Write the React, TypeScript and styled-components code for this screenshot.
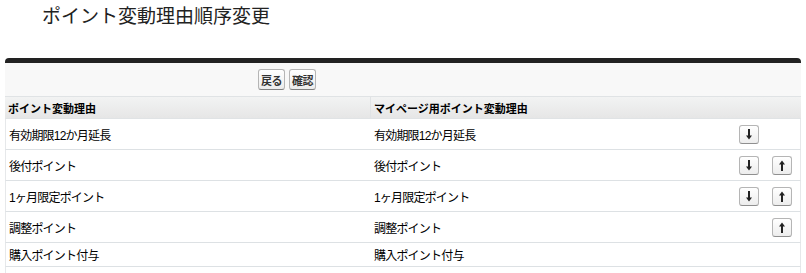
import { createGlobalStyle, styled } from 'styled-components';

const GlobalStyle = createGlobalStyle`
  body {
    margin: 0;
    background: #fff;
    font-family: Arial, 'Liberation Sans', 'Noto Sans CJK JP', sans-serif;
    color: #000;
  }
`;

type Reason = { name: string; myPage: string; down: boolean; up: boolean };

const reasons: Reason[] = [
  { name: '有効期限12か月延長', myPage: '有効期限12か月延長', down: true, up: false },
  { name: '後付ポイント', myPage: '後付ポイント', down: true, up: true },
  { name: '1ヶ月限定ポイント', myPage: '1ヶ月限定ポイント', down: true, up: true },
  { name: '調整ポイント', myPage: '調整ポイント', down: false, up: true },
  { name: '購入ポイント付与', myPage: '購入ポイント付与', down: false, up: false },
  { name: '購入翌サ月特別ポイント付与', myPage: '購入翌サ月特別ポイント付与', down: false, up: false },
];

const Arrow = ({ dir }: { dir: 'up' | 'down' }) => (
  <svg width="8" height="11" viewBox="0 0 8 11">
    {dir === 'down' ? (
      <>
        <rect x="3" y="0" width="2" height="8" fill="#222" />
        <path d="M1 6.5 L7 6.5 L4 10.5 Z" fill="#222" />
      </>
    ) : (
      <>
        <rect x="3" y="3" width="2" height="8" fill="#222" />
        <path d="M1 4.5 L7 4.5 L4 0.5 Z" fill="#222" />
      </>
    )}
  </svg>
);

const App = () => {
  return (
    <Page>
      <GlobalStyle />
      <Title>ポイント変動理由順序変更</Title>
      <Block>
        <ButtonBar>
          <Btn>戻る</Btn>
          <Btn>確認</Btn>
        </ButtonBar>
        <Table>
          <HeadCell>ポイント変動理由</HeadCell>
          <HeadCell $last>マイページ用ポイント変動理由</HeadCell>
          {reasons.map((r) => (
            <Row key={r.name} $tall={r.down || r.up}>
              <Cell>{r.name}</Cell>
              <Cell $divider>
                <span>{r.myPage}</span>
                <Moves>
                  <Slot>
                    {r.down && (
                      <ArrowBtn>
                        <Arrow dir="down" />
                      </ArrowBtn>
                    )}
                  </Slot>
                  <Slot>
                    {r.up && (
                      <ArrowBtn>
                        <Arrow dir="up" />
                      </ArrowBtn>
                    )}
                  </Slot>
                </Moves>
              </Cell>
            </Row>
          ))}
        </Table>
      </Block>
    </Page>
  );
};

export default App;

const Page = styled.div`
  width: 806px;
  height: 273px;
  overflow: hidden;
`;

const Title = styled.h1`
  margin: 0;
  padding: 5px 0 0 42px;
  height: 58px;
  box-sizing: border-box;

  font-size: 19px;
  font-weight: normal;
  line-height: 24px;
  color: #222;
`;

const Block = styled.div`
  margin: 0 5px;

  border-top: 5px solid #222;
  border-radius: 4px 4px 0 0;
  background-color: #f8f8f8;
`;

const ButtonBar = styled.div`
  display: flex;
  gap: 4px;
  align-items: center;

  height: 34px;
  padding-left: 253px;
  box-sizing: border-box;
  border-bottom: 1px solid #e0e3e5;
`;

const Btn = styled.button`
  height: 21px;
  padding: 0 2px;

  border: 1px solid #b5b5b5;
  border-bottom-color: #7f7f7f;
  border-radius: 3px;
  background: linear-gradient(#ffffff, #ececec);

  font-family: Arial, 'Noto Sans CJK JP', sans-serif;
  font-size: 11px;
  font-weight: bold;
  letter-spacing: -0.5px;
  color: #333;
`;

const Table = styled.div`
  display: grid;
  grid-template-columns: 365px 1fr;
  background-color: #fff;
`;

const HeadCell = styled.div<{ $last?: boolean }>`
  display: flex;
  align-items: center;

  height: 22px;
  padding-left: 3px;
  box-sizing: border-box;
  border-bottom: 1px solid #e0e3e5;
  border-left: ${(p) => (p.$last ? '1px solid #e0e3e5' : 'none')};
  background: linear-gradient(#f2f3f3, #e6e6e6);

  font-size: 11px;
  font-weight: bold;
  color: #000;
`;

const Row = styled.div<{ $tall: boolean }>`
  display: contents;

  > div {
    height: ${(p) => (p.$tall ? '31px' : '24px')};
  }
`;

const Cell = styled.div<{ $divider?: boolean }>`
  display: flex;
  align-items: center;

  padding-left: ${(p) => (p.$divider ? '4px' : '3px')};
  box-sizing: border-box;
  border-bottom: 1px solid #dde1e4;
  border-left: ${(p) => (p.$divider ? 'none' : '1px solid #e6e8ea')};
  border-right: ${(p) => (p.$divider ? '1px solid #e6e8ea' : 'none')};

  font-size: 12px;
  letter-spacing: -0.8px;
  color: #000;

  > span {
    flex: 1;
  }
`;

const Moves = styled.div`
  display: flex;
  gap: 13px;
  padding-right: 8px;
`;

const Slot = styled.div`
  width: 20px;
  height: 19px;
`;

const ArrowBtn = styled.button`
  display: flex;
  align-items: center;
  justify-content: center;

  width: 20px;
  height: 19px;
  padding: 0;

  border: 1px solid #b5b5b5;
  border-bottom-color: #8f8f8f;
  border-radius: 3px;
  background: linear-gradient(#ffffff, #ededed);
`;
